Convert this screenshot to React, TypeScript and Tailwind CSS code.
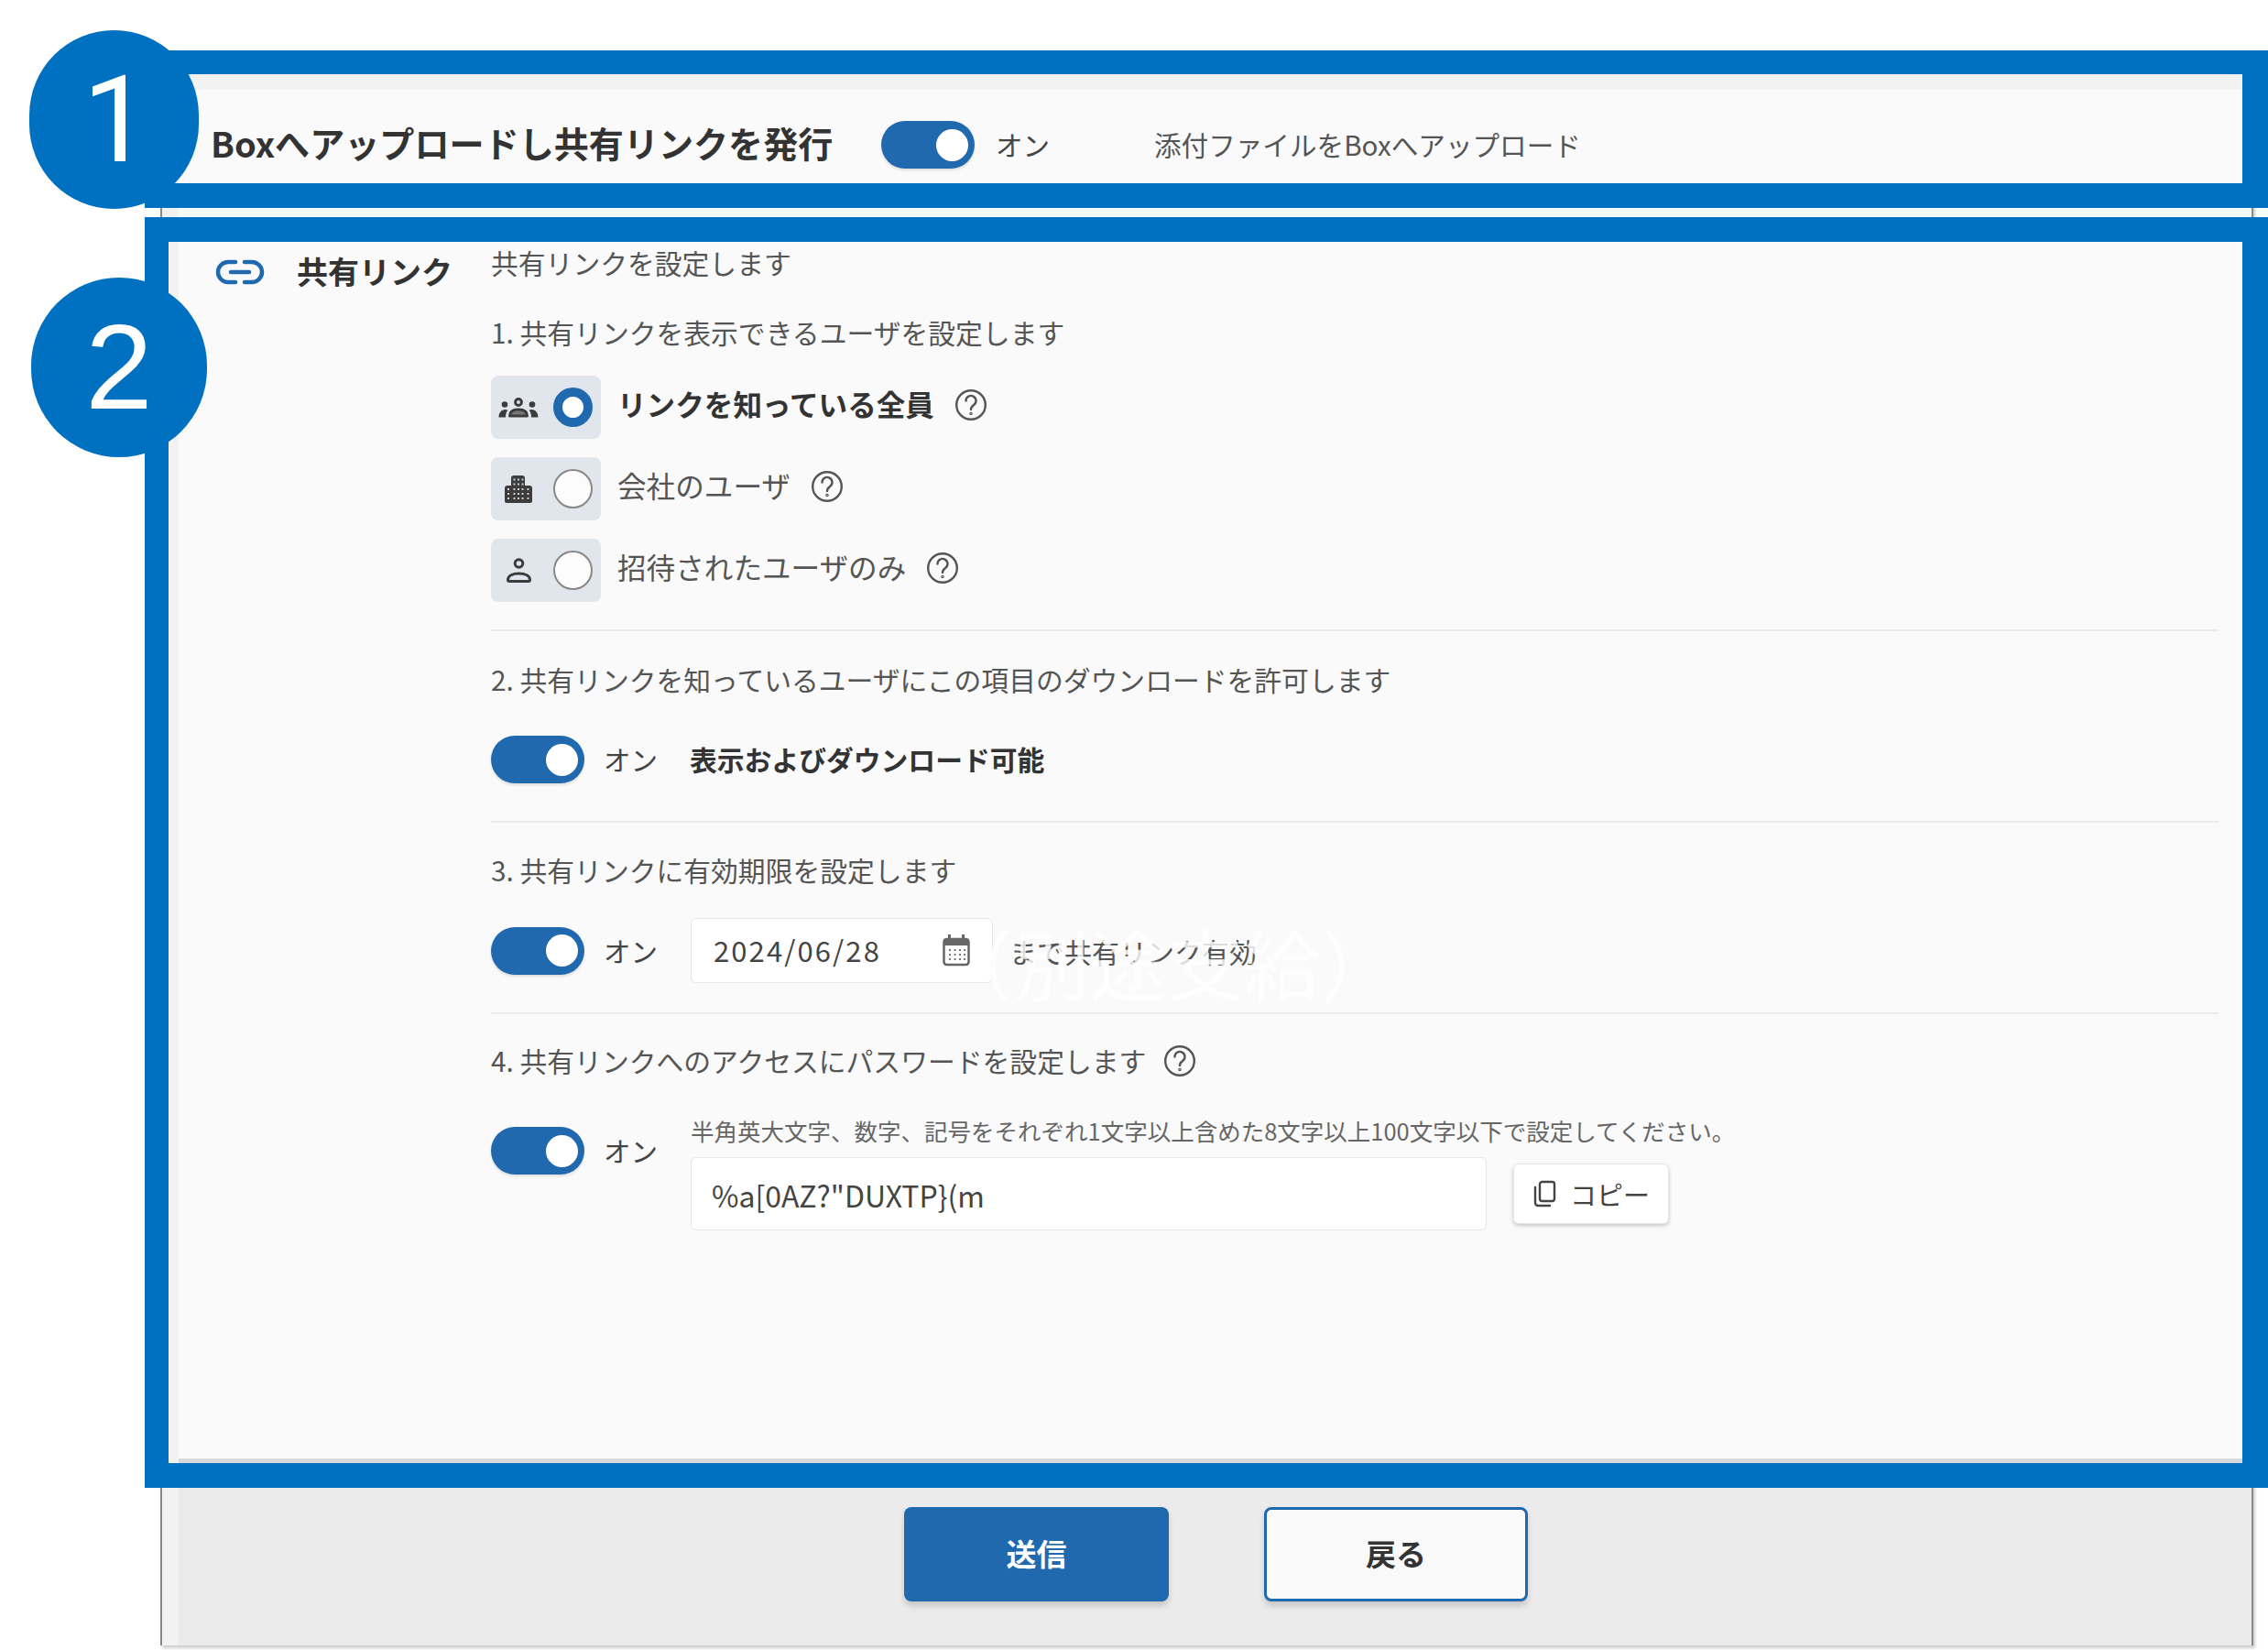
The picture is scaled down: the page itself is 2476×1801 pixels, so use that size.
const BLUE = "#2069ae";

function Toggle() {
  return (
    <div className="flex h-[52px] w-[102px] shrink-0 items-center justify-end rounded-full bg-[#2069ae] pr-[7px] shadow-[0_2px_3px_rgba(0,0,0,0.12)]">
      <div className="h-[35px] w-[35px] rounded-full bg-white" />
    </div>
  );
}

function On() {
  return <span className="block w-[59px] shrink-0 text-[29.5px] leading-none text-[#444]">オン</span>;
}

function Help({ className = "" }: { className?: string }) {
  return (
    <svg width="36" height="36" viewBox="0 0 36 36" fill="none" stroke="#555" strokeWidth="2.4" strokeLinecap="round" className={"shrink-0 " + className}>
      <circle cx="18" cy="18" r="15.8" />
      <path d="M12.5 13.5a5.5 5.5 0 1 1 8.6 4.5c-1.9 1.3-3.1 2.3-3.1 5" />
      <circle cx="18" cy="27.5" r="0.6" />
    </svg>
  );
}

function Heading({ children }: { children: React.ReactNode }) {
  return <div className="flex h-[40px] items-center gap-[19px] pb-[3px] text-[29.8px] leading-none text-[#555]">{children}</div>;
}

function Divider() {
  return <div className="h-[2px] w-[1886px] bg-[#ebebeb]" />;
}

function GroupIcon() {
  return (
    <svg width="44" height="22" viewBox="0 0 44 22">
      <circle cx="22" cy="5" r="3.4" fill="none" stroke="#3c3c3c" strokeWidth="3" />
      <path d="M12.5 20c0-5 4-7 9.5-7s9.5 2 9.5 7z" fill="#777" stroke="#3c3c3c" strokeWidth="3" strokeLinejoin="round" />
      <circle cx="7" cy="7.5" r="3.3" fill="#3c3c3c" />
      <circle cx="37" cy="7.5" r="3.3" fill="#3c3c3c" />
      <path d="M0.5 21.5c0-5 3-8.5 7-8.5 1 0 2 .2 3 .7-1.800 1.800-2.500 4.600-2.500 7.800z" fill="#3c3c3c" />
      <path d="M43.5 21.5c0-5-3-8.500-7-8.500-1 0-2 .2-3 .7 1.800 1.800 2.500 4.600 2.500 7.800z" fill="#3c3c3c" />
    </svg>
  );
}

function BuildingIcon() {
  const holes: [number, number][] = [];
  for (const y of [3.5, 8.5]) for (const x of [9.5, 14, 18.5]) holes.push([x, y]);
  for (const y of [14, 19, 24]) for (const x of [3, 9.5, 14, 18.5, 24.5]) holes.push([x, y]);
  return (
    <svg width="30" height="30" viewBox="0 0 30 30">
      <path d="M2 30a2 2 0 0 1-2-2V14a3 3 0 0 1 3-3h4V3a3 3 0 0 1 3-3h9a3 3 0 0 1 3 3v8h5a3 3 0 0 1 3 3v14a2 2 0 0 1-2 2z" fill="#3c3c3c" />
      {holes.map(([x, y]) => (
        <rect key={x + "-" + y} x={x} y={y} width="2" height="2" fill="#c8ced4" />
      ))}
    </svg>
  );
}

function PersonIcon() {
  return (
    <svg width="27" height="27" viewBox="0 0 27 27">
      <circle cx="13.5" cy="6" r="4.3" fill="none" stroke="#3c3c3c" strokeWidth="3" />
      <path d="M1.5 24c0-4.500 5-7 12-7s12 2.500 12 7a1.500 1.500 0 0 1-1.500 1.500h-21a1.500 1.500 0 0 1-1.500-1.500z" fill="none" stroke="#3c3c3c" strokeWidth="3" strokeLinejoin="round" />
    </svg>
  );
}

function LinkIcon() {
  return (
    <svg width="54" height="28" viewBox="0 0 54 28" fill="none" stroke={BLUE} strokeWidth="4.5" strokeLinecap="round" className="shrink-0">
      <path d="M22 3H14a11 11 0 0 0 0 22h8" />
      <path d="M32 3h8a11 11 0 0 1 0 22h-8" />
      <path d="M17 14h20" />
    </svg>
  );
}

function CalendarIcon() {
  const cells: [number, number][] = [];
  for (const y of [16, 21, 26]) for (const x of [7, 12.5, 18, 23]) cells.push([x, y]);
  return (
    <svg width="30" height="35" viewBox="0 0 30 35" className="shrink-0">
      <rect x="1.5" y="5" width="27" height="28" rx="3" fill="none" stroke="#666" strokeWidth="2.5" />
      <rect x="1.5" y="5" width="27" height="7" fill="#666" />
      <rect x="6" y="0" width="3" height="7" fill="#666" />
      <rect x="21" y="0" width="3" height="7" fill="#666" />
      {cells.map(([x, y]) => (
        <rect key={x + "-" + y} x={x} y={y} width="2" height="2" fill="#777" />
      ))}
    </svg>
  );
}

function CopyIcon() {
  return (
    <svg width="26" height="30" viewBox="0 0 26 30" fill="none" stroke="#444" strokeWidth="2.4" className="shrink-0">
      <rect x="8" y="2" width="16" height="21" rx="2.5" />
      <path d="M3 8v17a3 3 0 0 0 3 3h13" strokeLinecap="round" />
    </svg>
  );
}

function RadioRow({ icon, label, selected }: { icon: React.ReactNode; label: string; selected?: boolean }) {
  return (
    <div className="flex items-center">
      <div className="flex h-[69px] w-[120px] items-center rounded-[8px] bg-[#e0e6ec]">
        <div className="flex w-[60px] items-center justify-center">{icon}</div>
        {selected ? (
          <div className="ml-[8px] h-[43px] w-[43px] rounded-full border-[10px] border-[#2069ae] bg-white" />
        ) : (
          <div className="ml-[8px] h-[43px] w-[43px] rounded-full border-[2.5px] border-[#888] bg-[#fcfcfc]" />
        )}
      </div>
      <span className={"mb-[8px] ml-[18px] text-[31.6px] leading-none " + (selected ? "font-bold text-[#333]" : "text-[#555]")}>
        {label}
      </span>
      <Help className="mb-[6px] ml-[22px]" />
    </div>
  );
}

export default function App() {
  return (
    <div className="relative h-[1801px] w-[2476px] overflow-hidden bg-white font-['Noto_Sans_CJK_JP','Noto_Sans',sans-serif]">
      {/* application window */}
      <div className="ml-[175px] flex h-[1796px] w-[2285px] flex-col pt-[55px]">
        <div className="flex h-full flex-col border-x-2 border-[#888] bg-[#f2f2f2] pl-[18px] shadow-[2px_3px_3px_rgba(0,0,0,0.2)]">
          <div className="h-[43px] shrink-0" />
          <div className="flex h-[120px] shrink-0 items-center bg-[#fafafa] pl-[35px]">
            <span className="mb-[3px] w-[732px] shrink-0 text-[38.1px] font-bold leading-none text-[#333]">
              Boxへアップロードし共有リンクを発行
            </span>
            <Toggle />
            <span className="ml-[23px] w-[173px] shrink-0 text-[29.5px] leading-none text-[#444]">オン</span>
            <span className="text-[29.6px] leading-none text-[#555]">添付ファイルをBoxへアップロード</span>
          </div>

          <main className="flex h-[1379px] shrink-0 border-b-[5px] border-[#d9d9d9] bg-[#fafafa] pt-[50px]">
            <div className="flex h-[58px] w-[341px] shrink-0 items-center pl-[40px]">
              <LinkIcon />
              <span className="mb-[3px] ml-[35px] text-[34px] font-bold leading-none text-[#333]">共有リンク</span>
            </div>

            <div className="flex flex-col">
              <Heading>共有リンクを設定します</Heading>

              <div className="mt-[36px]">
                <Heading>1. 共有リンクを表示できるユーザを設定します</Heading>
              </div>

              <div className="mt-[26px] flex flex-col gap-[20px]">
                <RadioRow icon={<GroupIcon />} label="リンクを知っている全員" selected />
                <RadioRow icon={<BuildingIcon />} label="会社のユーザ" />
                <RadioRow icon={<PersonIcon />} label="招待されたユーザのみ" />
              </div>

              <div className="mt-[30px]">
                <Divider />
              </div>

              <div className="mt-[34px]">
                <Heading>2. 共有リンクを知っているユーザにこの項目のダウンロードを許可します</Heading>
              </div>

              <div className="mt-[40px] flex items-center">
                <Toggle />
                <span className="ml-[21px]">
                  <On />
                </span>
                <span className="ml-[35px] text-[29.8px] font-bold leading-none text-[#333]">表示およびダウンロード可能</span>
              </div>

              <div className="mt-[41px]">
                <Divider />
              </div>

              <div className="mt-[33px]">
                <Heading>3. 共有リンクに有効期限を設定します</Heading>
              </div>

              <div className="mt-[31px] flex items-center">
                <Toggle />
                <span className="ml-[21px]">
                  <On />
                </span>
                <div className="ml-[36px] flex h-[71px] w-[330px] items-center justify-between rounded-[6px] border border-[#e6e6e6] bg-white pl-[24px] pr-[24px]">
                  <span className="mb-[2px] text-[31px] leading-none tracking-[2.1px] text-[#444]">2024/06/28</span>
                  <CalendarIcon />
                </div>
                <span className="ml-[18px] text-[30px] leading-none text-[#555]">まで共有リンク有効</span>
              </div>

              <div className="mt-[32px]">
                <Divider />
              </div>

              <div className="mt-[32px]">
                <Heading>
                  4. 共有リンクへのアクセスにパスワードを設定します
                  <Help />
                </Heading>
              </div>

              <div className="mt-[41px] flex items-start">
                <div className="mt-[10px] flex items-center">
                  <Toggle />
                  <span className="ml-[21px]">
                    <On />
                  </span>
                </div>
                <div className="ml-[36px] flex flex-col">
                  <div className="flex h-[36px] items-center pb-[9px] text-[25.5px] leading-none text-[#666]">
                    半角英大文字、数字、記号をそれぞれ1文字以上含めた8文字以上100文字以下で設定してください。
                  </div>
                  <div className="mt-[7px] flex items-center">
                    <div className="flex h-[80px] w-[869px] items-center rounded-[6px] border border-[#e6e6e6] bg-white pl-[22px] pt-[2px] text-[32px] leading-none text-[#444]">
                      {'%a[0AZ?"DUXTP}(m'}
                    </div>
                    <button className="ml-[29px] flex h-[66px] w-[170px] items-center justify-center gap-[15px] rounded-[6px] border border-[#e6e6e6] bg-white shadow-[0_2px_4px_rgba(0,0,0,0.2)]">
                      <CopyIcon />
                      <span className="text-[29px] leading-none text-[#444]">コピー</span>
                    </button>
                  </div>
                </div>
              </div>
            </div>
          </main>

          <footer className="flex flex-1 items-center justify-start bg-[#ebebeb] pl-[792px]">
            <button className="flex h-[103px] w-[289px] items-center justify-center rounded-[8px] bg-[#2069ae] pb-[2px] text-[33px] font-bold leading-none text-white shadow-[0_5px_6px_rgba(0,0,0,0.15)]">
              送信
            </button>
            <button className="ml-[104px] flex h-[103px] w-[288px] items-center justify-center rounded-[8px] border-[3px] border-[#2069ae] bg-[#f9f9f9] pb-[2px] text-[33px] font-bold leading-none text-[#333] shadow-[0_5px_6px_rgba(0,0,0,0.15)]">
              戻る
            </button>
          </footer>
        </div>
      </div>

      {/* annotations over the screenshot */}
      <div className="pointer-events-none absolute left-[158px] top-[55px] h-[172px] w-[2318px] border-b-[27px] border-l-[26px] border-r-[28px] border-t-[26px] border-[#0070c0]" />
      <div className="pointer-events-none absolute left-[158px] top-[237px] h-[1387px] w-[2318px] border-b-[27px] border-l-[26px] border-r-[28px] border-t-[27px] border-[#0070c0]" />
      <div className="absolute left-[32px] top-[33px] flex h-[195px] w-[185px] items-center justify-center rounded-full bg-[#0070c0] pl-[5px] font-['Roboto',sans-serif] text-[132px] leading-none text-white">
        1
      </div>
      <div className="absolute left-[34px] top-[303px] flex h-[196px] w-[192px] items-center justify-center rounded-full bg-[#0070c0] font-['Liberation_Sans',sans-serif] text-[132px] leading-none text-white">
        2
      </div>
      <div className="pointer-events-none absolute left-[1022px] top-[995px] text-[84px] leading-[1.3] text-white/80">
        （別途支給）
      </div>
    </div>
  );
}
